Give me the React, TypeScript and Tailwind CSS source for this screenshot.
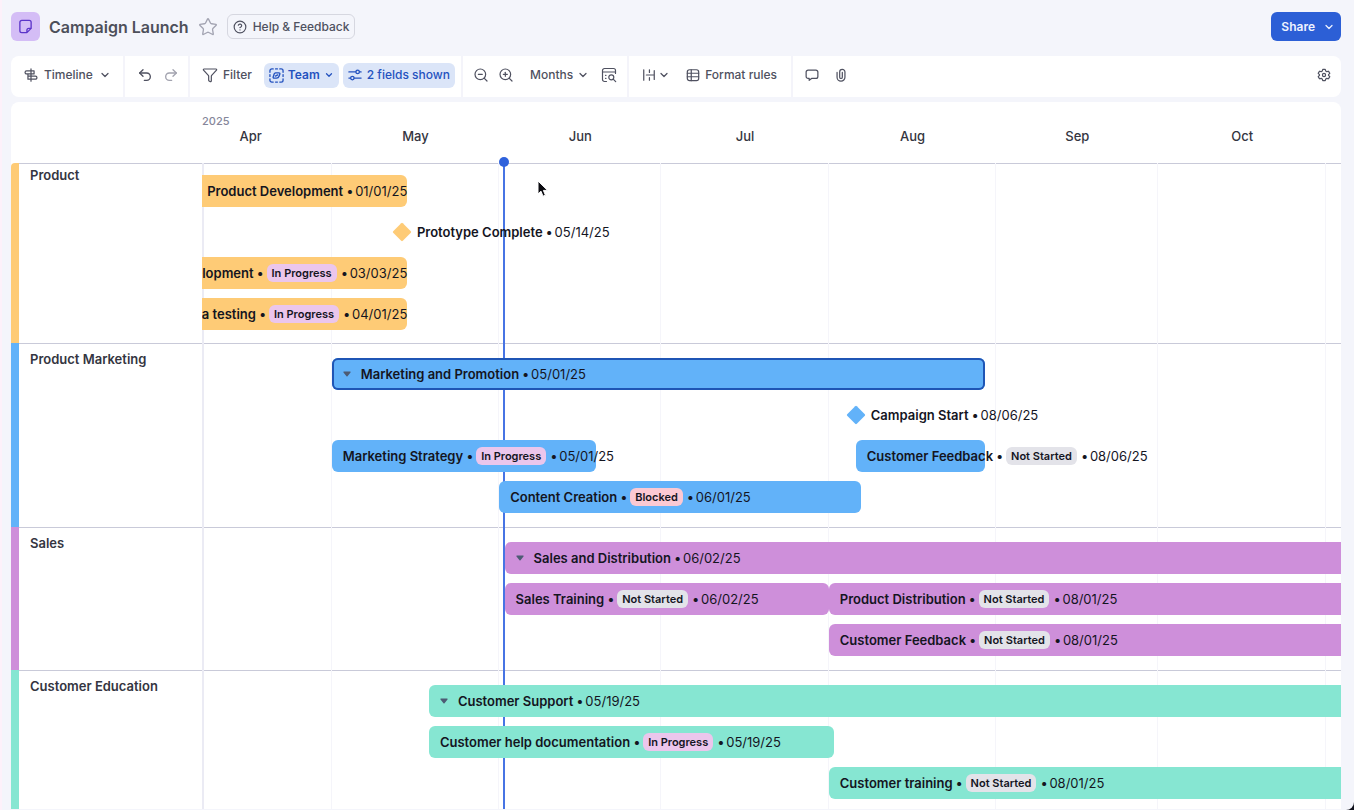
import React, { useState } from 'react';
import { ChevronDown, CircleHelp, Funnel, Redo2, Star, Undo2, ZoomIn, ZoomOut } from 'lucide-react';

type Status = 'In Progress' | 'Not Started' | 'Blocked';

interface Item {
  name: string;
  date: string;
  start: string;
  end?: string;
  status?: Status;
  parent?: boolean;
  selected?: boolean;
  alignEnd?: boolean;
}

interface Lane {
  name: string;
  strip: string;
  bar: string;
  diamond: string;
  heading: string;
  padding: string;
  rows: Item[][];
}

const DAY = 24 * 60 * 60 * 1000;
const RANGE_START = Date.UTC(2025, 3, 7);
const RANGE_DAYS = 210.8;
const TODAY = 55.9;

const dayOf = (iso: string): number => (Date.parse(iso) - RANGE_START) / DAY;
const pct = (days: number): string => `${(days / RANGE_DAYS) * 100}%`;

const months = [
  { name: 'Apr', days: 30 },
  { name: 'May', days: 31 },
  { name: 'Jun', days: 30 },
  { name: 'Jul', days: 31 },
  { name: 'Aug', days: 31 },
  { name: 'Sep', days: 30 },
  { name: 'Oct', days: 31 },
];

const statusColors: Record<Status, string> = {
  'In Progress': 'bg-[#ebc6ec]',
  'Not Started': 'bg-[#e3e3e9]',
  Blocked: 'bg-[#fcc9d3]',
};

const lanes: Lane[] = [
  {
    name: 'Product',
    strip: 'bg-[#fecb76] rounded-tl',
    bar: 'bg-[#fecb76]',
    diamond: 'fill-[#fecb76]',
    heading: 'pt-0.5',
    padding: 'pt-[11px] pb-[13px]',
    rows: [
      [{ name: 'Product Development', date: '01/01/25', start: '2025-04-07', end: '2025-05-15', alignEnd: true }],
      [{ name: 'Prototype Complete', date: '05/14/25', start: '2025-05-14' }],
      [{ name: 'Development', date: '03/03/25', start: '2025-04-07', end: '2025-05-15', status: 'In Progress', alignEnd: true }],
      [{ name: 'Beta testing', date: '04/01/25', start: '2025-04-07', end: '2025-05-15', status: 'In Progress', alignEnd: true }],
    ],
  },
  {
    name: 'Product Marketing',
    strip: 'bg-[#62b2f9]',
    bar: 'bg-[#62b2f9]',
    diamond: 'fill-[#62b2f9]',
    heading: 'pt-1.5',
    padding: 'py-3.5',
    rows: [
      [{ name: 'Marketing and Promotion', date: '05/01/25', start: '2025-05-01', end: '2025-08-30', parent: true, selected: true }],
      [{ name: 'Campaign Start', date: '08/06/25', start: '2025-08-06' }],
      [
        { name: 'Marketing Strategy', date: '05/01/25', start: '2025-05-01', end: '2025-06-19', status: 'In Progress' },
        { name: 'Customer Feedback', date: '08/06/25', start: '2025-08-06', end: '2025-08-30', status: 'Not Started' },
      ],
      [{ name: 'Content Creation', date: '06/01/25', start: '2025-06-01', end: '2025-08-07', status: 'Blocked' }],
    ],
  },
  {
    name: 'Sales',
    strip: 'bg-[#ce8fda]',
    bar: 'bg-[#ce8fda]',
    diamond: 'fill-[#ce8fda]',
    heading: 'pt-1.5',
    padding: 'py-3.5',
    rows: [
      [{ name: 'Sales and Distribution', date: '06/02/25', start: '2025-06-02', end: '2025-12-01', parent: true }],
      [
        { name: 'Sales Training', date: '06/02/25', start: '2025-06-02', end: '2025-08-01', status: 'Not Started' },
        { name: 'Product Distribution', date: '08/01/25', start: '2025-08-01', end: '2025-12-01', status: 'Not Started' },
      ],
      [{ name: 'Customer Feedback', date: '08/01/25', start: '2025-08-01', end: '2025-12-01', status: 'Not Started' }],
    ],
  },
  {
    name: 'Customer Education',
    strip: 'bg-[#86e6d2]',
    bar: 'bg-[#86e6d2]',
    diamond: 'fill-[#86e6d2]',
    heading: 'pt-1.5',
    padding: 'pt-3.5 pb-2.5',
    rows: [
      [{ name: 'Customer Support', date: '05/19/25', start: '2025-05-19', end: '2025-12-01', parent: true }],
      [{ name: 'Customer help documentation', date: '05/19/25', start: '2025-05-19', end: '2025-08-02', status: 'In Progress' }],
      [{ name: 'Customer training', date: '08/01/25', start: '2025-08-01', end: '2025-12-01', status: 'Not Started' }],
    ],
  },
];

const Icon: React.FC<{ children: React.ReactNode; className?: string }> = ({ children, className = 'size-3.5' }) => (
  <svg
    viewBox="0 0 16 16"
    className={`shrink-0 ${className}`}
    fill="none"
    stroke="currentColor"
    strokeWidth="1.4"
    strokeLinecap="round"
    strokeLinejoin="round"
    aria-hidden="true"
  >
    {children}
  </svg>
);

const TimelineIcon = () => (
  <Icon>
    <path d="M8 1v14M11.500 3.200H3a1.800 1.800 0 0 0 0 3.600h8.500M4.500 9.200H13a1.800 1.800 0 0 1 0 3.600H4.500zM11.500 3.200v3.600M4.500 6.800v2.400" />
  </Icon>
);

const TeamIcon = () => (
  <Icon className="size-[15px]">
    <path d="M1 4.500V3a2 2 0 0 1 2-2h1.500M7 1h2M11.500 1H13a2 2 0 0 1 2 2v1.500M15 7v2M15 11.500V13a2 2 0 0 1-2 2h-1.500M9 15H7M4.500 15H3a2 2 0 0 1-2-2v-1.500M1 9V7" />
    <path d="M7 5.200h3.600a1 1 0 0 1 1 1.300l-.9 2.300a3 3 0 0 1-2.600 2H5.400a1 1 0 0 1-1-1.300l.9-2.300a2 2 0 0 1 1.700-2zM6.800 8.600l2.500-1.300" />
  </Icon>
);

const FieldsIcon = () => (
  <Icon>
    <path d="M1 4.500h8M13 4.500h2M1 11.500h2M7 11.500h8" />
    <circle cx="11" cy="4.500" r="2" />
    <circle cx="5" cy="11.500" r="2" />
  </Icon>
);

const CalendarSearchIcon = () => (
  <Icon className="size-4">
    <g strokeWidth="1.2">
      <path d="M5.500 14.500H3.500a2 2 0 0 1-2-2v-9a2 2 0 0 1 2-2h9a2 2 0 0 1 2 2v3M1.500 5h13M4.500 8.300h.5M4.500 11.300h.5" />
      <circle cx="10.300" cy="10.300" r="2.500" />
      <path d="M12.200 12.200l2.500 2.500" />
    </g>
  </Icon>
);

const SpacingIcon = () => (
  <Icon>
    <path d="M2 2v12M14 3v10M5 8h9M8.500 2v3M8.500 11v3" />
  </Icon>
);

const TableIcon = () => (
  <Icon>
    <rect x="1.500" y="2" width="13" height="12.500" rx="2.500" />
    <path d="M1.500 6h13M1.500 10h13M6 2v12.500" />
  </Icon>
);

const CommentIcon = () => (
  <Icon>
    <path d="M3.500 2.500h9a2.200 2.200 0 0 1 2.200 2.200v5a2.200 2.200 0 0 1-2.200 2.200H7.500L4.800 14v-2.100H3.500a2.200 2.200 0 0 1-2.200-2.200v-5a2.200 2.200 0 0 1 2.200-2.200z" />
  </Icon>
);

const ClipIcon = () => (
  <Icon>
    <path d="M3.500 5v5.500a4.500 4.500 0 0 0 9 0V4.500a3 3 0 0 0-6 0v6a1.500 1.500 0 0 0 3 0V5" />
  </Icon>
);

const GearIcon = () => (
  <Icon>
    <path d="M6.600 1.500h2.800l.6 2 1.200.7 2-.5 1.400 2.400L13.200 7.500v1l1.400 1.400-1.400 2.400-2-.5-1.200.7-.6 2H6.600l-.6-2-1.200-.7-2 .5-1.400-2.400L2.800 8.500v-1L1.400 6.100l1.400-2.400 2 .5L6 3.500z" />
    <circle cx="8" cy="8" r="1.800" />
  </Icon>
);

const Chevron = () => <ChevronDown className="size-3 shrink-0" strokeWidth={2.5} />;

const ItemText: React.FC<{ item: Item }> = ({ item }) => (
  <span className="flex shrink-0 items-center gap-[3px] whitespace-nowrap">
    <span className="pt-0.5 font-semibold">{item.name}</span>
    <span className="w-1.5 pt-0.5 text-center">•</span>
    {item.status && (
      <>
        <span className={`mx-px rounded-md px-[5px] text-[11px] leading-[18px] font-semibold ${statusColors[item.status]}`}>
          {item.status}
        </span>
        <span className="w-1.5 pt-0.5 text-center">•</span>
      </>
    )}
    <span className="pt-0.5">{item.date}</span>
  </span>
);

const Row: React.FC<{ items: Item[]; lane: Lane }> = ({ items, lane }) => {
  let cursor = 0;
  return (
    <div className="flex h-8">
      {items.map((item) => {
        const start = dayOf(item.start);
        const end = item.end ? dayOf(item.end) : start;
        const offset = start - cursor;
        cursor = end;

        if (!item.end) {
          return (
            <div key={item.name} className="flex w-0 shrink-0 items-center" style={{ marginLeft: pct(offset) }}>
              <div className="-ml-2.5 flex shrink-0 items-center gap-[5px]">
                <svg viewBox="0 0 20 20" className={`size-5 shrink-0 ${lane.diamond}`} aria-hidden="true">
                  <path d="M9.200 1.200a1.200 1.200 0 0 1 1.600 0l8 8a1.200 1.200 0 0 1 0 1.600l-8 8a1.200 1.200 0 0 1-1.600 0l-8-8a1.200 1.200 0 0 1 0-1.600z" />
                </svg>
                <ItemText item={item} />
              </div>
            </div>
          );
        }

        return (
          <div
            key={item.name}
            className={`flex shrink-0 items-center ${lane.bar} ${item.alignEnd ? 'justify-end rounded-r-md' : 'rounded-md pl-[11px]'} ${
              item.selected ? 'ring-2 ring-[#1f55b5] ring-inset' : ''
            }`}
            style={{ marginLeft: pct(offset), width: pct(end - start) }}
          >
            {item.parent && (
              <button type="button" aria-label={`Collapse ${item.name}`} className="mr-2.5 shrink-0">
                <svg viewBox="0 0 8 8" className="size-2 fill-[#4d5b74]" aria-hidden="true">
                  <path d="M1 1.500h6a.6.6 0 0 1 .5 1L4.500 6.200a.7.7 0 0 1-1 0L.5 2.500a.6.6 0 0 1 .5-1z" />
                </svg>
              </button>
            )}
            <ItemText item={item} />
          </div>
        );
      })}
    </div>
  );
};

const Toolbar: React.FC = () => (
  <div className="flex h-[41px] items-stretch rounded-lg bg-white text-[12px] font-medium text-[#4f5160]">
    <div className="flex items-center border-r-2 border-[#f4f4fa] pr-3 pb-[3px] pl-[13px]">
      <button type="button" className="flex items-center gap-1.5">
        <TimelineIcon />
        Timeline
        <Chevron />
      </button>
    </div>
    <div className="flex items-center gap-2.5 border-r-2 border-[#f4f4fa] pr-[9px] pb-[3px] pl-3">
      <button type="button" aria-label="Undo"><Undo2 className="size-4" /></button>
      <button type="button" aria-label="Redo" className="text-[#a2a3af]"><Redo2 className="size-4" /></button>
    </div>
    <div className="flex items-center gap-1 border-r-2 border-[#f4f4fa] pr-1.5 pb-[3px] pl-3">
      <button type="button" className="mr-2 flex items-center gap-[5px]">
        <Funnel className="size-4" strokeWidth={1.8} />
        Filter
      </button>
      <button type="button" className="flex h-[25px] items-center gap-1 rounded-md bg-[#dbe5f8] px-[5px] font-semibold text-[#2452bf]">
        <TeamIcon />
        Team
        <ChevronDown className="size-2.5 shrink-0" strokeWidth={3} />
      </button>
      <button type="button" className="flex h-[25px] items-center gap-[5px] rounded-md bg-[#dbe5f8] px-[5px] text-[#2452bf]">
        <FieldsIcon />
        2 fields shown
      </button>
    </div>
    <div className="flex items-center border-r-2 border-[#f4f4fa] pr-2.5 pb-[3px] pl-2.5">
      <button type="button" aria-label="Zoom out"><ZoomOut className="size-4" strokeWidth={1.8} /></button>
      <button type="button" aria-label="Zoom in" className="ml-[9px]"><ZoomIn className="size-4" strokeWidth={1.8} /></button>
      <button type="button" className="ml-4 flex items-center gap-1">
        Months
        <Chevron />
      </button>
      <button type="button" aria-label="Jump to date" className="ml-3"><CalendarSearchIcon /></button>
    </div>
    <div className="flex items-center border-r-2 border-[#f4f4fa] pr-3.5 pb-[3px] pl-[13px]">
      <button type="button" aria-label="Row spacing" className="flex items-center gap-0.5">
        <SpacingIcon />
        <Chevron />
      </button>
      <button type="button" className="ml-4 flex items-center gap-[5px]">
        <TableIcon />
        Format rules
      </button>
    </div>
    <div className="flex items-center gap-[15px] px-3 pb-[3px]">
      <button type="button" aria-label="Comments"><CommentIcon /></button>
      <button type="button" aria-label="Attachments"><ClipIcon /></button>
    </div>
    <button type="button" aria-label="Settings" className="mr-2.5 ml-auto pb-[3px]"><GearIcon /></button>
  </div>
);

const Timeline: React.FC = () => (
  <div className="rounded-t-lg bg-white text-[13px] text-[#14151f]">
    <div className="flex h-[61px]">
      <div className="w-[191px] shrink-0" />
      <div className="min-w-0 flex-1 overflow-hidden pt-3">
        <div className="text-[11px] leading-[14px] font-medium text-[#85869a]">2025</div>
        <div className="flex font-medium text-[#343541]">
          {months.map((month, index) => (
            <div
              key={month.name}
              className="shrink-0 text-center leading-[17px]"
              style={{ width: pct(month.days), marginLeft: index === 0 ? pct(-6) : undefined }}
            >
              {month.name}
            </div>
          ))}
        </div>
      </div>
    </div>

    <div className="relative">
      {/* month lines, behind the bars */}
      <div className="absolute inset-y-0 right-0 left-[191px]">
        <div className="flex h-full overflow-hidden shadow-[inset_2px_0_0_#ebebf4]">
          {months.map((month, index) => (
            <div
              key={month.name}
              className="shrink-0 border-r border-[#f5f5fa]"
              style={{ width: pct(index === 0 ? month.days - 6 : month.days) }}
            />
          ))}
        </div>
      </div>

      {lanes.map((lane) => (
        <section key={lane.name} className="flex">
          <div className={`w-2 shrink-0 ${lane.strip}`} />
          <div className="flex min-w-0 flex-1 border-t border-[#c9cad9]">
            <h2 className={`w-[183px] shrink-0 pl-[11px] font-semibold text-[#343541] ${lane.heading}`}>{lane.name}</h2>
            <div className={`relative z-10 grid min-w-0 flex-1 gap-[9px] overflow-hidden ${lane.padding}`}>
              {lane.rows.map((row) => (
                <Row key={row[0].name} items={row} lane={lane} />
              ))}
            </div>
          </div>
        </section>
      ))}

      {/* today marker */}
      <div className="absolute inset-y-0 right-0 left-[191px]">
        <div className="relative h-full w-0.5 -translate-x-1/2 bg-[#4774e4]" style={{ left: pct(TODAY) }}>
          <div className="absolute -top-1.5 -left-1 size-2.5 rounded-full bg-[#2f62dc]" />
        </div>
      </div>

      <svg viewBox="0 0 12 18" className="absolute top-[17px] left-[526px] z-20 h-[18px] w-3" aria-hidden="true">
        <path d="M1 1v13l3-2.800 2 5 2.400-1-2-4.800h4.200z" fill="#0b0b10" stroke="#fff" strokeWidth="1" />
      </svg>
    </div>
  </div>
);

export default function App() {
  const [starred, setStarred] = useState<boolean>(false);

  return (
    <div className="min-h-screen bg-[#10121c] font-['Inter',sans-serif]">
      <div className="min-h-screen rounded-br-lg border-l-2 border-[#fdf1fa] bg-[#f4f5fb] pr-[13px] pl-[9px]">
        <header className="flex h-14 items-center pb-[3px]">
          <div className="flex size-[29px] items-center justify-center rounded-md bg-[#d4bdf6] text-[#5b34c9]">
            <Icon className="size-[15px]">
              <path d="M4 1.500h8a2 2 0 0 1 2 2V10l-4.500 4.500H4a2 2 0 0 1-2-2v-9a2 2 0 0 1 2-2zM14 10h-2.500a2 2 0 0 0-2 2v2.500" />
            </Icon>
          </div>
          <h1 className="ml-[9px] text-[16px] font-semibold text-[#4d4f5a]">Campaign Launch</h1>
          <button
            type="button"
            aria-label="Add to favorites"
            aria-pressed={starred}
            className="ml-[9px] text-[#a3a4b2]"
            onClick={() => setStarred(!starred)}
          >
            <Star className="size-5" strokeWidth={1.6} fill={starred ? 'currentColor' : 'none'} />
          </button>
          <button
            type="button"
            className="ml-[9px] flex h-[25px] items-center gap-1.5 rounded-md border border-[#d6d7e0] px-[5px] text-[12px] font-medium text-[#4f5160]"
          >
            <CircleHelp className="size-3.5" />
            Help &amp; Feedback
          </button>
          <button
            type="button"
            className="ml-auto flex h-[29px] items-center gap-2 rounded-md bg-[#2c5fd6] pr-1.5 pl-2.5 text-[12px] font-semibold text-[#eef3ff]"
          >
            Share
            <Chevron />
          </button>
        </header>

        <Toolbar />

        <main className="mt-[5px]">
          <Timeline />
        </main>
      </div>
    </div>
  );
}
